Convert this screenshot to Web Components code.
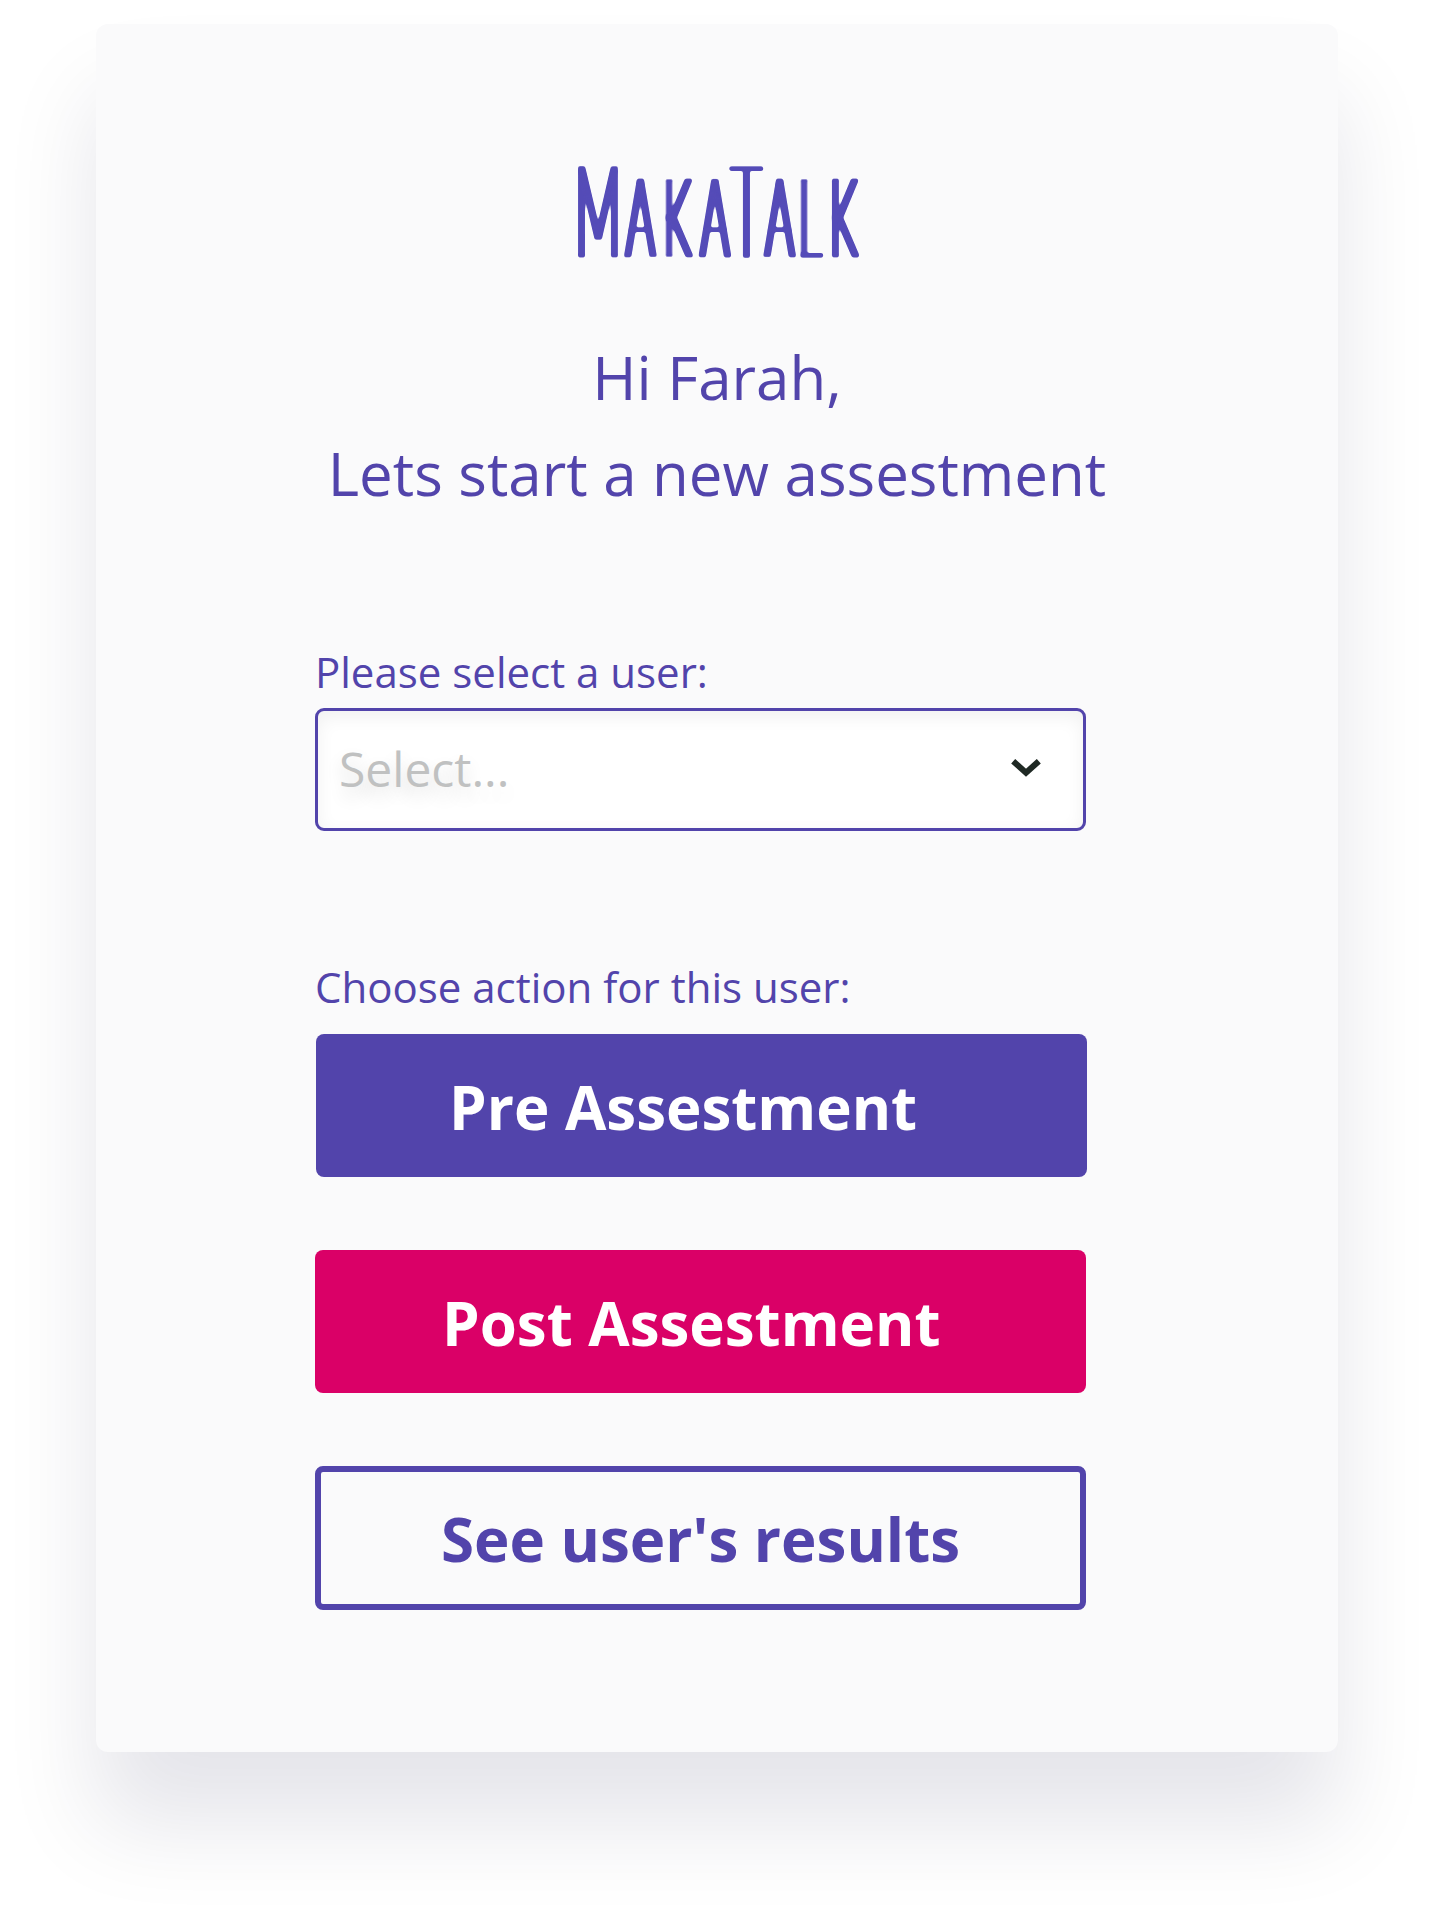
<!DOCTYPE html>
<html lang="en">
<head>
<meta charset="utf-8">
<title>MakaTalk</title>
<style>
  html, body { margin: 0; background: #fff; }
  body { height: 1920px; overflow: hidden; font-family: "Open Sans", "Noto Sans", sans-serif; color: #5244ab; }
</style>
</head>
<body>
<maka-card>
  <maka-logo slot="logo"></maka-logo>
  <maka-greeting><span>Hi Farah,</span><span>Lets start a new assestment</span></maka-greeting>
  <maka-field label="Please select a user:" style="--gap: 8px; margin-top: 122px"><maka-select>Select...</maka-select></maka-field>
  <maka-field label="Choose action for this user:" style="--gap: 19px; margin-top: 127px">
    <maka-button style="margin-left: 1px; --indent: 133px; --drop: 3px">Pre Assestment</maka-button>
    <maka-button variant="accent" style="--indent: 127px">Post Assestment</maka-button>
    <maka-button variant="outline" style="--indent: 120px">See user's results</maka-button>
  </maka-field>
</maka-card>
<script>
const define = (name, html, setup) => customElements.define(name, class extends HTMLElement {
  constructor() {
    super();
    this.attachShadow({ mode: "open" }).innerHTML = html;
  }
  connectedCallback() { if (setup) setup(this); }
});

define("maka-card", `
<style>
  :host { display: flex; flex-direction: column; box-sizing: border-box; width: 1242px; height: 1728px; margin: 24px 96px 0; padding: 126px 219px 0; border-radius: 12px; background: #fafafb; box-shadow: 0 72px 94px rgba(14, 4, 54, .106); }
</style>
<slot name="logo"></slot><slot></slot>`);

// Wordmark: hairline capitals, condensed, then thickened into round marker strokes by the filter.
define("maka-logo", `
<style>
  :host { display: block; width: 320px; height: 120px; margin-left: 245px; }
  svg { display: block; overflow: visible; }
  text { font-family: Lato, sans-serif; font-weight: 100; font-size: 126px; fill: #554cb8; stroke: #554cb8; stroke-width: 1px; stroke-linejoin: round; text-anchor: middle; text-transform: uppercase; }
  .small { font-size: 109px; }
</style>
<svg width="320" height="120" viewBox="0 0 320 120" role="img" aria-label="MakaTalk">
  <filter id="marker" filterUnits="userSpaceOnUse" x="0" y="0" width="320" height="120" color-interpolation-filters="sRGB">
    <feMorphology operator="dilate" radius="3 1"/>
    <feGaussianBlur stdDeviation="1.3"/>
    <feComponentTransfer><feFuncA type="linear" slope="3.5" intercept="-1.1"/></feComponentTransfer>
  </filter>
  <g filter="url(#marker)">
    <text transform="scale(.4 1)" y="106"><tspan x="95">M</tspan><tspan class="small" x="201.2 292.5 387">aka</tspan><tspan x="466">T</tspan><tspan class="small" x="549 624 708">alk</tspan></text>
  </g>
</svg>`);

define("maka-greeting", `
<style>
  :host { display: flex; flex-direction: column; align-items: center; margin: 59px -100px 0; font-size: 60px; line-height: 96px; white-space: nowrap; }
</style>
<slot></slot>`);

define("maka-field", `
<style>
  :host { display: flex; flex-direction: column; }
  label { font-size: 42px; line-height: 57px; margin-bottom: var(--gap); white-space: nowrap; }
  div { display: flex; flex-direction: column; gap: 72.6px; }
</style>
<label></label><div><slot></slot></div>`, el => { el.shadowRoot.querySelector("label").textContent = el.getAttribute("label"); });

define("maka-select", `
<style>
  :host { display: flex; align-items: center; justify-content: space-between; box-sizing: border-box; width: 771px; height: 123px; padding: 0 42px 0 21px; border: 3px solid #5244ab; border-radius: 9px; background: #fff; box-shadow: inset 0 6px 18px rgba(0, 0, 0, .06); font-size: 48px; line-height: 65px; color: #c0c1c1; text-shadow: 0 9px 18px rgba(0, 0, 0, .14); }
  span { margin-top: -2px; }
  svg { display: block; margin-top: -3px; }
</style>
<span><slot></slot></span>
<svg width="30" height="18" viewBox="0 0 30 18"><path d="M2.2 2.2 15 13.700 27.800 2.200" fill="none" stroke="#1f2924" stroke-width="6"/></svg>`);

define("maka-button", `
<style>
  :host { display: flex; align-items: center; box-sizing: border-box; width: 771px; height: 143.4px; padding: var(--drop, 2px) 0 0 var(--indent); border-radius: 8px; background: #5244ab; color: #fff; font-size: 60px; line-height: 82px; font-weight: 700; white-space: nowrap; }
  :host([variant="accent"]) { background: #da0067; }
  :host([variant="outline"]) { height: 144px; background: transparent; border: 6px solid #5244ab; color: #5244ab; }
</style>
<slot></slot>`);
</script>
</body>
</html>
